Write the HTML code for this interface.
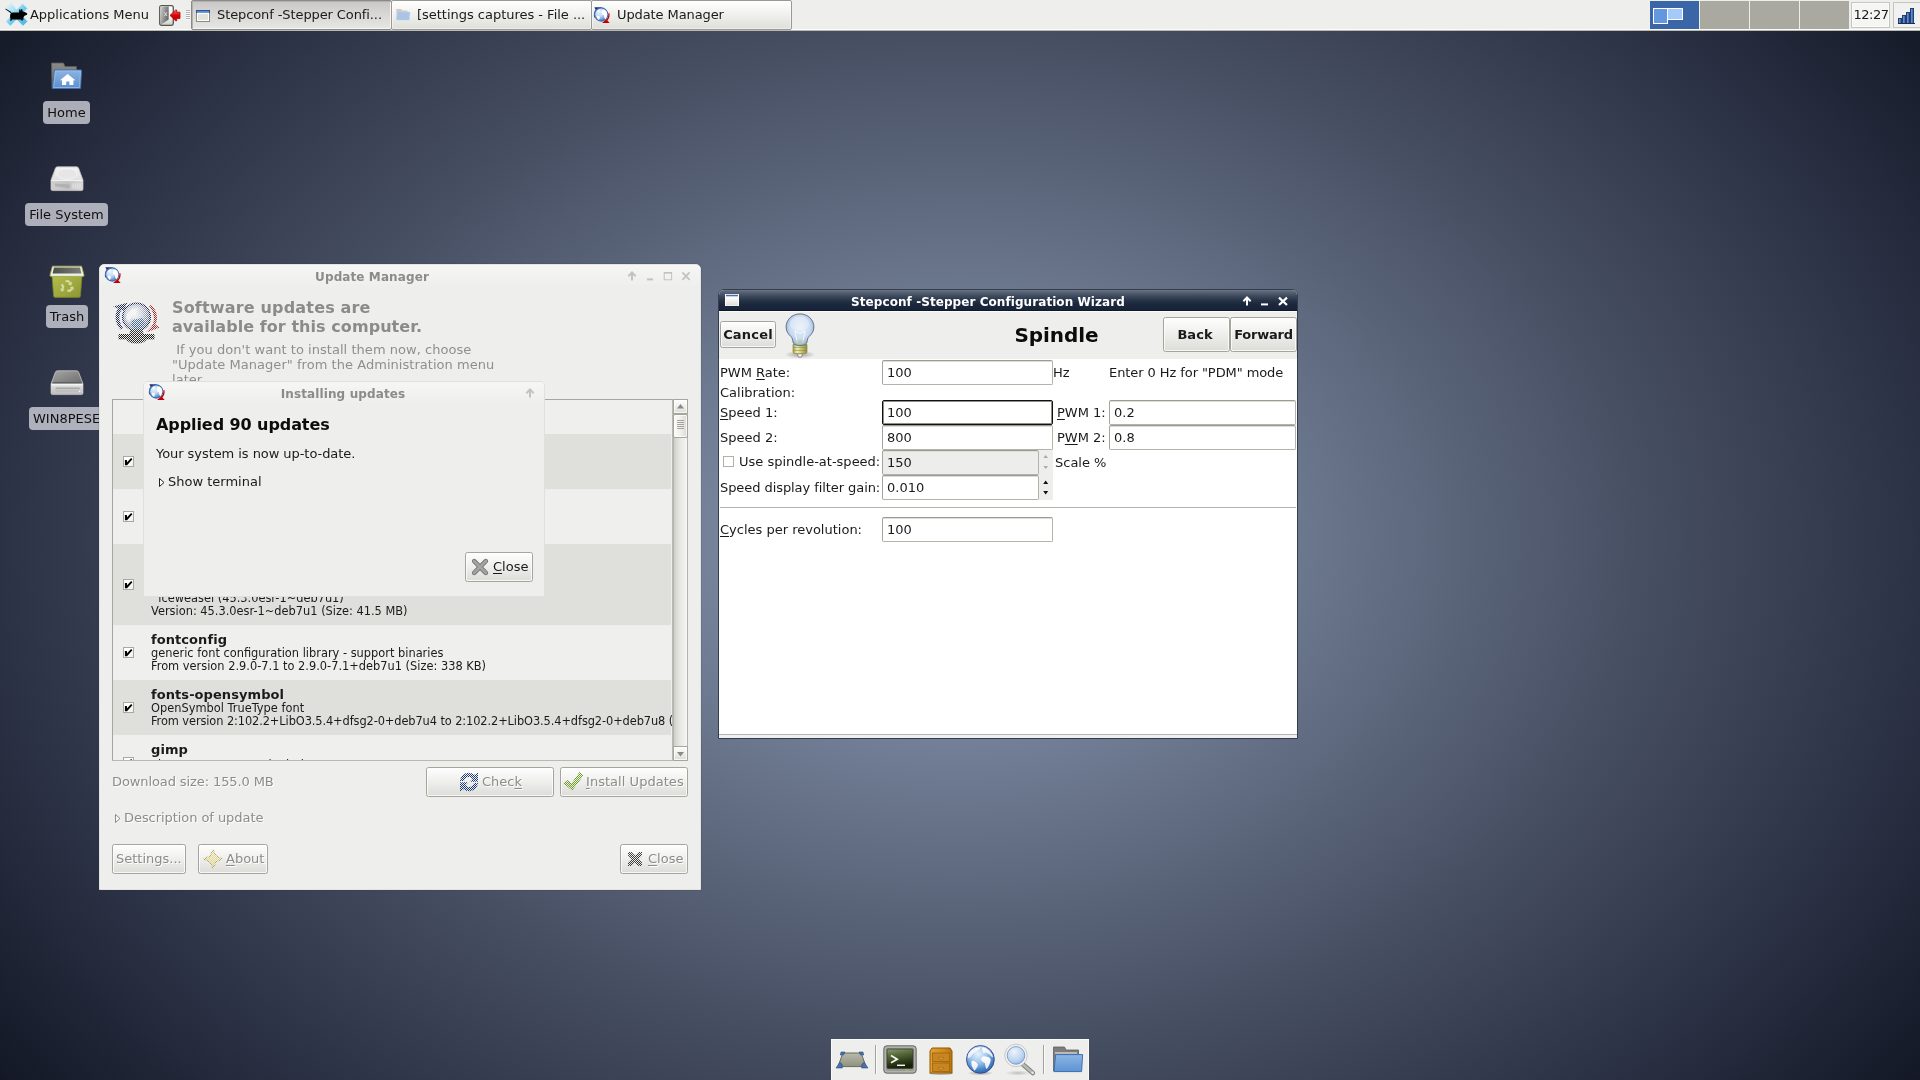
<!DOCTYPE html>
<html lang="en">
<head>
<meta charset="utf-8">
<title>Desktop</title>
<style>
*{box-sizing:border-box;margin:0;padding:0}
html,body{width:1920px;height:1080px;overflow:hidden}
body{position:relative;font-family:"DejaVu Sans","Liberation Sans",sans-serif;font-size:13px;color:#1a1a1a;
 background:#2c3245 radial-gradient(ellipse 1206px 893px at 960px 540px,#8797b0 0%,#758299 20.8%,#474f63 56.3%,#2c3245 79.6%,#161b2a 97.5%,#141826 100%);}
.abs{position:absolute}
.t{position:absolute;white-space:pre;line-height:16px;height:16px}
u{text-decoration:underline;text-underline-offset:2px;text-decoration-thickness:1px}
svg{position:absolute;overflow:visible}
/* ---------- top panel ---------- */
#panel{position:absolute;left:0;top:0;width:1920px;height:31px;background:#eeeeec;border-bottom:1px solid #b9b9b0;box-shadow:inset 0 -1px 0 #fbfbf9}
.task{position:absolute;top:0;height:30px;border:1px solid #9a9892;border-radius:2px;background:linear-gradient(#ffffff,#f1f1ef 45%,#dededa);box-shadow:inset 0 0 0 1px rgba(255,255,255,.45)}
.task.on{background:linear-gradient(#c9c7c5,#d6d5d3 40%,#e6e6e4);border-color:#8c8a86;box-shadow:inset 1px 1px 0 #b4b2af,inset -1px -1px 0 #f6f6f5}
.ws{position:absolute;top:1px;height:28px;width:49px;background:#a9a9a0}
/* ---------- desktop icons ---------- */
.dl{position:absolute;height:23px;line-height:23px;background:rgba(206,208,216,.8);border-radius:4px;text-align:center;color:#101010;white-space:pre;overflow:hidden}
/* ---------- generic gtk ---------- */
.btn{position:absolute;border:1px solid #a5a59b;border-radius:2.5px;background:linear-gradient(#fefefe,#f0f0ee 45%,#dcdcd8);box-shadow:inset 0 0 0 1px rgba(255,255,255,.75)}
.entry{position:absolute;background:#fff;border:1px solid #b3b3aa;border-top-color:#9c9c93;border-left-color:#a5a59c;border-radius:2px;box-shadow:inset 0 1px 0 #deded9}
.dis{color:#8c8d89;text-shadow:1px 1px 0 #fff}
.cb{position:absolute;left:10px;width:11px;height:11px;background:linear-gradient(135deg,#fff 55%,#ecece9);border:1px solid #a9a9a0;display:block}
.cb:after{content:"";position:absolute;left:-1px;top:-1px;width:11px;height:11px;background:#000;clip-path:polygon(1.900px 4.100px,3.900px 4.100px,4.100px 6.300px,8.100px 1.900px,9.400px 3.200px,4.100px 9.300px,1.900px 9.300px)}
.row{position:absolute;left:38px;font-size:11.4px;line-height:13px;white-space:pre;color:#1a1a1a;padding-top:6.5px}
.row b{display:block;font-size:13px;line-height:15px;height:15.500px;letter-spacing:.07px}
</style>
</head>
<body>
<div id="root" style="position:absolute;left:0;top:0;width:1920px;height:1080px;will-change:transform">

<!-- ================= TOP PANEL ================= -->
<div id="panel">
 <!-- xfce logo -->
 <svg style="left:0;top:0" width="32" height="30" viewBox="0 0 32 30">
  <defs><linearGradient id="xg" x1="0" y1="0" x2="1" y2="1"><stop offset="0" stop-color="#ecf9fe"/><stop offset=".35" stop-color="#a6dff5"/><stop offset=".6" stop-color="#63c4ec"/><stop offset="1" stop-color="#4fb6e4"/></linearGradient></defs>
  <path d="M5.200 9.200 L11.400 3.200 L16.600 9.600 L22.600 3.800 L27.400 8.200 L21.600 14.400 L27.600 21.400 L23 26 L16.600 19.600 L10.400 26 L6 21.600 L12 14.600 Z" fill="url(#xg)" stroke="#c9ecf9" stroke-width=".6"/>
  <path d="M5.100 9.100 L5.900 8.700 L11.600 12.300 L11 13.200 Z" fill="#050505"/>
  <path d="M10.400 14 Q10.700 12.400 13 12.400 L19 12.600 L19.300 9.400 L20.200 9 L20.800 11.200 L21.200 9.200 L22.100 9 L22.700 11.400 C24.400 11.600 26 12.200 27.200 13.600 L27 14.800 L24.600 15.700 L23.600 17 L23.200 18.400 L24 19 L23.400 19.500 L22.400 19.400 L22.800 20.700 L21.600 20.500 L20.800 19.600 L12 19.600 L11.200 20.900 L10.100 20.500 L10.500 19 C10 17.600 10 15.600 10.400 14 Z" fill="#020202"/>
 </svg>
 <div class="t" style="left:30px;top:7px;font-size:13px;letter-spacing:-.02px">Applications Menu</div>
 <!-- logout -->
 <svg style="left:159px;top:5px" width="24" height="22" viewBox="0 0 24 22">
  <defs><linearGradient id="dg" x1="0" y1="0" x2="1" y2=".4"><stop offset="0" stop-color="#d2d2d0"/><stop offset=".5" stop-color="#9b9b99"/><stop offset="1" stop-color="#6a6a68"/></linearGradient>
  <linearGradient id="dw" x1="0" y1="0" x2="0" y2="1"><stop offset="0" stop-color="#ffffff"/><stop offset=".6" stop-color="#f4f4f2"/><stop offset="1" stop-color="#c9c9c5"/></linearGradient>
  <linearGradient id="ra" x1="0" y1="0" x2="0" y2="1"><stop offset="0" stop-color="#f06a6a"/><stop offset=".5" stop-color="#dc0505"/><stop offset="1" stop-color="#c60000"/></linearGradient></defs>
  <rect x=".7" y=".7" width="13.600" height="19.600" rx="1.800" fill="url(#dw)" stroke="#555753" stroke-width="1.300"/>
  <path d="M1.400 1.400 H9.700 V14.600 L2.400 19.200 H1.400 Z" fill="url(#dg)"/>
  <path d="M5.400 7.400 L8 11 M8 7.400 L5.400 11" stroke="#e4e4e2" stroke-width=".9"/>
  <path d="M11 10.400 L16.700 5 L17.700 5 L17.700 7.200 L21 7.200 V13.400 H17.700 V15.800 L16.700 15.800 Z" fill="url(#ra)" stroke="#b00000" stroke-width=".8" stroke-linejoin="round"/>
 </svg>
 <!-- handle -->
 <div class="abs" style="left:186px;top:10px;width:4px;height:10px;background:repeating-linear-gradient(#b2b2aa 0 1px,#fafaf9 1px 2px)"></div>

 <!-- task buttons -->
 <div class="task on" style="left:191px;width:201px"></div>
 <svg style="left:196px;top:10px" width="14" height="12" viewBox="0 0 14 12"><rect x=".5" y=".5" width="13" height="11" fill="#e2e4dc" stroke="#8b8b82"/><rect x="1.500" y="3.500" width="11" height="7" fill="none" stroke="#fff"/><rect x="0" y="0" width="14" height="3" fill="#2a5298"/><rect x="1" y="1.200" width="12" height="1.800" fill="#6c9bd8"/></svg>
 <div class="t" style="left:217px;top:7px;letter-spacing:-.1px">Stepconf -Stepper Confi...</div>

 <div class="task" style="left:391px;width:201px"></div>
 <svg style="left:396px;top:8px" width="15" height="13" viewBox="0 0 15 13"><path d="M.4 1 H5.200 L6.200 2.600 H11.400 V11 H.4 Z" fill="#cbcbc9"/><path d="M1.600 4 H14 L13.200 12 H.6 Z" fill="#a9c4e4" stroke="#bcd0e8" stroke-width=".5"/></svg>
 <div class="t" style="left:417px;top:7px;letter-spacing:-.02px">[settings captures - File ...</div>

 <div class="task" style="left:591px;width:201px"></div>
 <svg style="left:594px;top:7px" width="17" height="17" viewBox="0 0 17 17"><use href="#globe16"/></svg>
 <div class="t" style="left:617px;top:7px;letter-spacing:-.1px">Update Manager</div>

 <!-- pager -->
 <div class="ws" style="left:1650px;background:#3a66a7"></div>
 <div class="abs" style="left:1653px;top:8px;width:15px;height:16px;background:#6398e0;border:1px solid #fff"></div>
 <div class="abs" style="left:1667px;top:8px;width:16px;height:12px;background:#a6c9fb;border:1px solid #fff"></div>
 <div class="ws" style="left:1700px"></div>
 <div class="ws" style="left:1750px"></div>
 <div class="ws" style="left:1800px"></div>
 <!-- clock -->
 <div class="abs" style="left:1851px;top:2px;width:39px;height:26px;border:1px solid #c6c6c1;background:#f5f5f3;box-shadow:inset 0 0 0 1px #fbfbfa"></div>
 <div class="t" style="left:1853.500px;top:7px;letter-spacing:-.5px">12:27</div>
 <!-- network -->
 <div class="abs" style="left:1893px;top:2px;width:27px;height:26px;border:1px solid #c6c6c1;border-right:0;background:#f1f1ef"></div>
 <svg style="left:1898px;top:8px" width="18" height="16" viewBox="0 0 18 16">
  <defs><linearGradient id="ng" x1="0" y1="0" x2="1" y2="0"><stop offset="0" stop-color="#7aa3dc"/><stop offset="1" stop-color="#2c5aa0"/></linearGradient></defs>
  <rect x=".5" y="10.5" width="3" height="5" fill="url(#ng)" stroke="#1f3f78"/>
  <rect x="4.5" y="7.5" width="3" height="8" fill="url(#ng)" stroke="#1f3f78"/>
  <rect x="8.5" y="4.5" width="3" height="11" fill="url(#ng)" stroke="#1f3f78"/>
  <rect x="12.5" y=".5" width="3" height="15" fill="url(#ng)" stroke="#1f3f78"/>
  <rect x="0" y="15" width="17" height="1" fill="#1c2c4a"/>
 </svg>
</div>

<!-- shared symbols -->
<svg width="0" height="0" style="left:-10px;top:-10px">
 <defs>
  <radialGradient id="glg" cx=".36" cy=".3" r=".8"><stop offset="0" stop-color="#e8f3ff"/><stop offset=".45" stop-color="#bcd8f6"/><stop offset=".85" stop-color="#4a82c6"/><stop offset="1" stop-color="#3a70b8"/></radialGradient>
  <g id="globe16">
   <path d="M.4 .2 H8.200 L6.600 1.600 C4.400 1.800 2.600 3 1.600 4.800 C.8 6.400 .7 8.400 1.300 10 L.2 10.400 C-.6 7.800 0 5 1.600 2.800 Z" fill="#1f2f78"/>
   <path d="M8 16 H15.700 L13.400 13.400 C15.200 11.600 16 9 15.400 6 L14.200 6.400 C14.600 9 13.800 11.200 12 12.600 Z" fill="#c40000"/>
   <circle cx="7.200" cy="7.500" r="6.600" fill="url(#glg)" stroke="#476cae" stroke-width="1.100"/>
   <path d="M7.800 3.400 L10.600 2.600 L12.600 4.600 L13.400 7.600 L12.600 10.600 L11.200 12.600 L10.200 10.200 L9.800 8 L8 7.400 Z M2.600 9.200 L4.400 8.400 L6 10 L5.400 12.200 L4 12.800 Z M3 4 L5.400 2.400 L6 3.400 L4 5.400 Z" fill="#fff"/>
  </g>
 </defs>
</svg>

<!-- ================= DESKTOP ICONS ================= -->
<!-- Home -->
<svg style="left:50px;top:62px" width="34" height="28" viewBox="0 0 34 28">
 <defs><linearGradient id="hf" x1="0" y1="0" x2="0" y2="1"><stop offset="0" stop-color="#8cb4e2"/><stop offset="1" stop-color="#5b8fd0"/></linearGradient>
 <linearGradient id="hb" x1="0" y1="0" x2="0" y2="1"><stop offset="0" stop-color="#8a8a88"/><stop offset="1" stop-color="#6b6b69"/></linearGradient></defs>
 <path d="M1.5 1 H13.5 L15 4.5 H26.5 V26.5 H2 Z" fill="url(#hb)" stroke="#5c5c5a" stroke-width=".8"/>
 <path d="M4.5 8 H31.5 L30.5 26.5 H2.5 Z" fill="url(#hf)" stroke="#3f6fb3" stroke-width="1"/>
 <path d="M5.4 9 H30.4 L29.6 25.5 H3.6 Z" fill="none" stroke="#a9c8ee" stroke-width=".8" opacity=".8"/>
 <path d="M17.6 12 L25.4 18.2 H23.4 V23 H19.4 V19.4 H16.2 V23 H12 V18.2 H10 Z" fill="#fff"/>
</svg>
<div class="dl" style="left:43px;top:101px;width:47px">Home</div>

<!-- File System -->
<svg style="left:50px;top:166px" width="34" height="26" viewBox="0 0 34 26">
 <defs><linearGradient id="fs1" x1="0" y1="0" x2="0" y2="1"><stop offset="0" stop-color="#f2f2f2"/><stop offset="1" stop-color="#d2d2d2"/></linearGradient>
 <linearGradient id="fs2" x1="0" y1="0" x2="1" y2="0"><stop offset="0" stop-color="#cfcfcf"/><stop offset=".5" stop-color="#c2c2c2"/><stop offset="1" stop-color="#d8d8d8"/></linearGradient></defs>
 <path d="M7.5 .8 H26.5 Q28 .8 28.6 2.2 L33 14 V23 Q33 24.6 31.4 24.6 H2.6 Q1 24.6 1 23 V14 L5.4 2.2 Q6 .8 7.5 .8 Z" fill="url(#fs1)" stroke="#bdbdbd" stroke-width=".8"/>
 <ellipse cx="17" cy="8" rx="10" ry="5.4" fill="#e6e6e6" stroke="#f6f6f6" stroke-width=".8"/>
 <path d="M1.4 15 H32.6 V23 Q32.6 24.2 31.4 24.2 H2.6 Q1.4 24.2 1.4 23 Z" fill="url(#fs2)"/>
 <path d="M1.4 14.6 H32.6" stroke="#f4f4f4" stroke-width="1"/>
 <path d="M5 17.6 L20 18.4 V22.4 L5 20.2 Z" fill="#aaa" opacity=".7"/>
 <path d="M23 17.5 V22.5 M25.3 17.5 V22.5 M27.6 17.5 V22.5 M29.9 17.5 V22.5" stroke="#e4e4e4" stroke-width="1.1"/>
</svg>
<div class="dl" style="left:25px;top:203px;width:83px">File System</div>

<!-- Trash -->
<svg style="left:49px;top:265px" width="36" height="34" viewBox="0 0 36 34">
 <defs><linearGradient id="tg" x1="0" y1="0" x2="1" y2="1"><stop offset="0" stop-color="#b4bd4e"/><stop offset="1" stop-color="#8d9732"/></linearGradient>
 <linearGradient id="ti" x1="0" y1="0" x2="1" y2="0"><stop offset="0" stop-color="#4c4e48"/><stop offset="1" stop-color="#7c7e78"/></linearGradient></defs>
 <path d="M3 11 H33 L31.4 31 Q31.3 32.4 29.8 32.4 H6.2 Q4.7 32.4 4.6 31 Z" fill="url(#tg)" stroke="#7a8426" stroke-width=".8"/>
 <path d="M3.4 1.2 H32.6 L35 10.2 Q35 11.4 33.6 11.4 H2.4 Q1 11.4 1 10.2 Z" fill="#eef0ea" stroke="#a2aa3e" stroke-width=".9"/>
 <path d="M5 2.6 H31 L32.4 8.6 H3.6 Z" fill="url(#ti)"/>
 <g fill="#dfe5b4" opacity=".85">
  <path d="M16 15.4 L19.6 15 L21.6 17.6 L22.8 16.6 L22.6 20.4 L19 19.8 L20.2 18.8 L18.8 17 L17 17.4 Z"/>
  <path d="M13.4 18.6 L15.4 21.6 L14.4 24.6 L15.8 25 L12.6 26.8 L11.2 23.4 L12.6 23.8 L13.2 21.8 L11.8 20.4 Z"/>
  <path d="M18 26.6 L21.4 27 L23.4 24.4 L24.6 25.2 L24.4 21.6 L20.8 22 L22 23 L20.8 24.6 L18.6 24.4 Z"/>
 </g>
</svg>
<div class="dl" style="left:46px;top:305px;width:42px">Trash</div>

<!-- WIN8PESE -->
<svg style="left:50px;top:370px" width="34" height="26" viewBox="0 0 34 26">
 <defs><linearGradient id="rd1" x1="0" y1="0" x2="1" y2="1"><stop offset="0" stop-color="#a6a6a6"/><stop offset="1" stop-color="#6c6c6c"/></linearGradient>
 <linearGradient id="rd2" x1="0" y1="0" x2="0" y2="1"><stop offset="0" stop-color="#e2e2e2"/><stop offset="1" stop-color="#bcbcbc"/></linearGradient></defs>
 <path d="M7.5 .8 H26.5 Q28 .8 28.6 2.2 L33 14 H1 L5.4 2.2 Q6 .8 7.5 .8 Z" fill="url(#rd1)" stroke="#c9c9c9" stroke-width=".8"/>
 <path d="M3.2 12 H30.8 L31.8 14 H2.2 Z" fill="#5f5f5f"/>
 <path d="M1 14 H33 V23 Q33 24.6 31.4 24.6 H2.6 Q1 24.6 1 23 Z" fill="url(#rd2)" stroke="#d6d6d6" stroke-width=".6"/>
 <path d="M1.4 14.6 H32.6" stroke="#f3f3f3" stroke-width="1.6"/>
 <rect x="5.5" y="17.6" width="24.5" height="3.6" rx=".8" fill="#a9a9a9"/>
 <rect x="5.5" y="19.2" width="24.5" height="1.4" fill="#cfcfcf"/>
 <circle cx="29.6" cy="21.4" r=".8" fill="#fff"/>
</svg>
<div class="dl" style="left:29px;top:407px;width:100px;text-align:left;padding-left:4px">WIN8PESE_X</div>

<!-- WINDOWS -->
<!-- ================= UPDATE MANAGER WINDOW ================= -->
<div class="abs" style="left:99px;top:264px;width:602px;height:626px;background:#eeeeec;border-radius:5px 5px 0 0;border:1px solid #e3e3e0;box-shadow:0 0 0 .5px rgba(40,46,64,.25)"></div>
<div class="abs" style="left:100px;top:265px;width:600px;height:22px;border-radius:4px 4px 0 0;background:linear-gradient(#f6f6f5,#eeeeec)"></div>
<svg style="left:105px;top:267px" width="17" height="17" viewBox="0 0 17 17"><use href="#globe16"/></svg>
<div class="t" style="left:272px;top:269px;width:200px;text-align:center;font-weight:bold;font-size:12px;color:#8b8c87;letter-spacing:.1px">Update Manager</div>
<svg style="left:626px;top:270px" width="68" height="12" viewBox="0 0 68 12" fill="none" stroke="#c2c2bf">
 <path d="M6 10.5 V3 M2.4 6.2 L6 2.4 L9.6 6.2" stroke-width="2"/>
 <path d="M21 9.4 H27" stroke-width="2"/>
 <rect x="38.2" y="2.6" width="7.4" height="7.2" stroke-width="1"/><path d="M38 2.8 H46" stroke-width="1.6"/>
 <path d="M56.4 2.4 L63.6 9.8 M63.6 2.4 L56.4 9.8" stroke-width="1.7"/>
</svg>

<!-- big icon (insensitive) -->
<svg style="left:112px;top:302px" width="49" height="42" viewBox="0 0 49 42">
 <defs>
  <pattern id="stip" width="2" height="2" patternUnits="userSpaceOnUse"><rect width="2" height="2" fill="#fff"/><rect width="1" height="1" fill="#000"/><rect x="1" y="1" width="1" height="1" fill="#000"/></pattern>
  <mask id="stm"><rect width="60" height="60" fill="url(#stip)"/></mask>
  <radialGradient id="bg1" cx=".42" cy=".4" r=".62"><stop offset="0" stop-color="#ffffff"/><stop offset=".45" stop-color="#c2cadb"/><stop offset="1" stop-color="#4c5a80"/></radialGradient>
 </defs>
 <g mask="url(#stm)">
  <path d="M1 4.600 L15.400 .8 L11.400 9 L9.800 7.400 C6.400 12 6.600 20 11 26 L8.600 27.400 C2.600 21 2.200 12 6 6.400 Z" fill="#1f2f55"/>
  <path d="M37 4 L39 3 C45.600 9 46.400 17 43.400 22.400 L47.800 25.600 L34 30.400 L39.600 24.600 L41 22 C43 17 42 10 37 4 Z" fill="#a02c2c"/>
  <circle cx="24.500" cy="15" r="13.800" fill="url(#bg1)" stroke="#26264f" stroke-width="1.600"/>
  <path d="M15 12 L20 7 L26 6 L24 11 L19 15 L17 20 L14 17 Z" fill="#fff" opacity=".85"/>
  <path d="M20 18 L30 16 L33 21 L29 27 L23 27.600 L19 23 Z" fill="#3c5f96" opacity=".85"/>
  <path d="M18.500 27.600 H30.500 L31.600 32 H17.400 Z" fill="#333"/>
  <rect x="6.500" y="32" width="36" height="5.400" fill="#1c1c1c"/>
  <ellipse cx="24.500" cy="37" rx="10" ry="4.600" fill="#2a2a2a"/>
 </g>
</svg>
<div class="abs dis" style="left:172px;top:298px;font-weight:bold;font-size:16px;line-height:19px;white-space:pre;color:#8b8c87;text-shadow:none;letter-spacing:.06px"><span style="letter-spacing:.17px">Software updates are</span>
available for this computer.</div>
<div class="abs" style="left:172px;top:342px;font-size:13px;line-height:15px;white-space:pre;color:#8f908c;letter-spacing:.04px"> If you don't want to install them now, choose
"Update Manager" from the Administration menu
later.</div>

<!-- list -->
<div class="abs" style="left:112px;top:399px;width:561px;height:362px;border:1px solid #a6a69d;border-bottom-color:#b9b9b1;border-right-color:#b9b9b1;background:#efefed;overflow:hidden">
 <div class="abs" style="left:0;top:34px;width:558px;height:55px;background:#dfe0db"></div>
 <div class="abs" style="left:0;top:144px;width:558px;height:81px;background:#dfe0db"></div>
 <div class="abs" style="left:0;top:280px;width:558px;height:55px;background:#dfe0db"></div>
 <i class="cb" style="top:56px"></i><i class="cb" style="top:111px"></i><i class="cb" style="top:179px"></i><i class="cb" style="top:247px"></i><i class="cb" style="top:302px"></i><i class="cb" style="top:357px"></i>
 <div class="row" style="top:34px"><b>file</b>Determines file type using "magic" numbers<br>From version 5.11-2+deb7u8 to 5.11-2+deb7u9 (Size: 53 KB)</div>
 <div class="row" style="top:89px"><b>firebird2.5</b>Firebird client library<br>From version 2.5.2 to 2.5.2+deb7u1 (Size: 493 KB)</div>
 <div class="row" style="top:144px"><b>firefox</b>Web browser based on Firefox<br>Packages:<br>  iceweasel (45.3.0esr-1~deb7u1)<br>Version: 45.3.0esr-1~deb7u1 (Size: 41.5 MB)</div>
 <div class="row" style="top:225px"><b>fontconfig</b>generic font configuration library - support binaries<br>From version 2.9.0-7.1 to 2.9.0-7.1+deb7u1 (Size: 338 KB)</div>
 <div class="row" style="top:280px"><b>fonts-opensymbol</b>OpenSymbol TrueType font<br><span style="letter-spacing:-.1px">From version 2:102.2+LibO3.5.4+dfsg2-0+deb7u4 to 2:102.2+LibO3.5.4+dfsg2-0+deb7u8 (Size: 200 KB)</span></div>
 <div class="row" style="top:335px"><b>gimp</b><span style="position:relative;top:2.300px">The GNU Image Manipulation Program<br>From version 2.8.2-2+deb7u1 to 2.8.2-2+deb7u2 (Size: 4.6 MB)</span></div>
</div>
<!-- scrollbar -->
<div class="abs" style="left:673px;top:399px;width:15px;height:362px;background:linear-gradient(90deg,#cfcfcb,#e4e4e1 40%,#f6f6f5);border:1px solid #b4b4ac"></div>
<div class="btn" style="left:673px;top:399px;width:15px;height:15px;border-radius:1px"></div>
<div class="btn" style="left:673px;top:414px;width:15px;height:24px;border-radius:2px;background:linear-gradient(90deg,#fdfdfd,#efefed 50%,#d9d9d5)"></div>
<div class="abs" style="left:677px;top:420px;width:7px;height:10px;background:repeating-linear-gradient(#a4a49c 0 1px,transparent 1px 2px)"></div>
<div class="btn" style="left:673px;top:746px;width:15px;height:15px;border-radius:1px"></div>
<svg style="left:673px;top:399px" width="15" height="362" viewBox="0 0 15 362"><path d="M4 9.5 L7.5 5 L11 9.5 Z" fill="#8a8b86"/><path d="M4 353 L7.5 357.5 L11 353 Z" fill="#8a8b86"/></svg>

<div class="t dis" style="left:112px;top:774px;letter-spacing:-.1px">Download size: 155.0 MB</div>
<div class="btn" style="left:426px;top:767px;width:128px;height:30px"></div>
<svg style="left:459px;top:772px" width="20" height="20" viewBox="0 0 20 20"><g mask="url(#stm)">
 <path d="M1 9 C1.600 4 5.600 .8 10 .8 C12 .8 13.800 1.600 15.200 2.800 L19 .6 V9.800 H10.600 L13.400 7 C12.400 5.600 11.200 5 10 5 C7.600 5 5.600 6.600 5 9 Z" fill="#1c3c78"/>
 <path d="M19 11 C18.400 16 14.400 19.200 10 19.200 C8 19.200 6.200 18.400 4.800 17.200 L1 19.400 V10.200 H9.400 L6.600 13 C7.600 14.400 8.800 15 10 15 C12.400 15 14.400 13.400 15 11 Z" fill="#1c3c78"/>
</g></svg>
<div class="t dis" style="left:482px;top:774px">Chec<u>k</u></div>
<div class="btn" style="left:560px;top:767px;width:128px;height:30px"></div>
<svg style="left:563px;top:771px" width="21" height="20" viewBox="0 0 21 20"><g mask="url(#stm)"><path d="M1.4 12.4 L5 9.6 L8.4 13.4 L16.6 1.6 L20 4.4 L9 19 Z" fill="#73a21c" stroke="#4e7a10" stroke-width=".8"/></g></svg>
<div class="t dis" style="left:586px;top:774px;letter-spacing:.04px"><u>I</u>nstall Updates</div>

<svg style="left:114px;top:813px" width="8" height="11" viewBox="0 0 8 11"><path d="M1.5 1.5 L6 5.5 L1.5 9.5 Z" fill="#fafafa" stroke="#8a8b86" stroke-width="1"/></svg>
<div class="t dis" style="left:124px;top:810px;letter-spacing:-.06px">Description of update</div>

<div class="btn" style="left:112px;top:844px;width:74px;height:30px"></div>
<div class="t dis" style="left:116px;top:851px">Settings...</div>
<div class="btn" style="left:198px;top:844px;width:70px;height:30px"></div>
<svg style="left:203px;top:849px" width="20" height="20" viewBox="0 0 20 20"><g mask="url(#stm)"><path d="M10 .8 L13 7 L19.2 10 L13 13 L10 19.2 L7 13 L.8 10 L7 7 Z" fill="#e6d98a" stroke="#a59a3c" stroke-width="1"/></g></svg>
<div class="t dis" style="left:226px;top:851px"><u>A</u>bout</div>
<div class="btn" style="left:620px;top:844px;width:68px;height:30px"></div>
<svg style="left:626px;top:850px" width="18" height="18" viewBox="0 0 18 18"><g mask="url(#stm)"><path d="M3.200 3.200 L14.800 14.800 M14.800 3.200 L3.200 14.800" stroke="#3c3c3a" stroke-width="5" stroke-linecap="round"/></g></svg>
<div class="t dis" style="left:648px;top:851px"><u>C</u>lose</div>
<!--UMEND-->
<!-- ================= INSTALLING UPDATES DIALOG ================= -->
<div class="abs" style="left:143px;top:381px;width:402px;height:216px;background:#eeeeec;border-radius:5px 5px 0 0;border:1px solid #e0e0dd"></div>
<div class="abs" style="left:144px;top:382px;width:400px;height:22px;border-radius:4px 4px 0 0;background:linear-gradient(#f6f6f5,#eeeeec)"></div>
<svg style="left:149px;top:384px" width="17" height="17" viewBox="0 0 17 17"><use href="#globe16"/></svg>
<div class="t" style="left:243px;top:386px;width:200px;text-align:center;font-weight:bold;font-size:12px;color:#8b8c87;letter-spacing:.12px">Installing updates</div>
<svg style="left:524px;top:387px" width="12" height="12" viewBox="0 0 12 12" fill="none" stroke="#c2c2bf"><path d="M6 10.5 V3 M2.4 6.2 L6 2.4 L9.6 6.2" stroke-width="2"/></svg>
<div class="t" style="left:156px;top:415px;font-weight:bold;font-size:16px;line-height:20px;height:20px;letter-spacing:-.08px;color:#0c0c0c">Applied 90 updates</div>
<div class="t" style="left:156px;top:446px;letter-spacing:-.06px">Your system is now up-to-date.</div>
<svg style="left:158px;top:476.500px" width="8" height="11" viewBox="0 0 8 11"><path d="M1.5 1.5 L6 5.5 L1.5 9.5 Z" fill="#fff" stroke="#222" stroke-width="1"/></svg>
<div class="t" style="left:168px;top:474px">Show terminal</div>
<div class="btn" style="left:465px;top:552px;width:68px;height:30px"></div>
<svg style="left:471px;top:558px" width="18" height="18" viewBox="0 0 18 18"><path d="M3.2 3.2 L14.8 14.8 M14.8 3.2 L3.2 14.8" stroke="#6f706b" stroke-width="4.6" stroke-linecap="round"/><path d="M3.2 3.2 L14.8 14.8 M14.8 3.2 L3.2 14.8" stroke="#a3a49f" stroke-width="3" stroke-linecap="round"/></svg>
<div class="t" style="left:493px;top:559px"><u>C</u>lose</div>

<!-- ================= STEPCONF WINDOW ================= -->
<div class="abs" style="left:718px;top:289px;width:580px;height:450px;background:#fff;border:1px solid #323d4f;border-radius:6px 6px 0 0;overflow:hidden">
 <div class="abs" style="left:0;top:0;width:578px;height:21px;background:linear-gradient(#6b7481 0,#566273 12%,#3e4b5e 30%,#273448 52%,#1b273b 72%,#17233a 100%);border-bottom:1px solid #0e1929"></div>
 <div class="abs" style="left:0;top:21px;width:578px;height:48px;background:#eeeeec;border-top:1px solid #fbfbf8"></div>
 <div class="abs" style="left:0;top:444px;width:578px;height:4px;background:#f0f0ee;border-top:1.5px solid #b4b4b2"></div>
</div>
<svg style="left:725px;top:294px" width="14" height="12" viewBox="0 0 14 12"><defs><linearGradient id="wi" x1="0" y1="0" x2="0" y2="1"><stop offset="0" stop-color="#fff"/><stop offset=".35" stop-color="#fbfbfa"/><stop offset="1" stop-color="#dcded7"/></linearGradient></defs><rect x="0" y="0" width="14" height="12" fill="#fdfdfb"/><rect x="1" y="1" width="12" height="10.500" fill="url(#wi)"/><rect x="1" y=".8" width="12" height="1.500" fill="#4a6eb0"/></svg>
<div class="t" style="left:838px;top:294px;width:300px;text-align:center;font-weight:bold;font-size:12px;color:#fff;letter-spacing:.07px">Stepconf -Stepper Configuration Wizard</div>
<svg style="left:1241px;top:295px" width="50" height="12" viewBox="0 0 50 12" fill="none" stroke="#fff">
 <path d="M6 10.5 V3 M2.4 6.2 L6 2.4 L9.6 6.2" stroke-width="2"/>
 <path d="M20 9.4 H27" stroke-width="2"/>
 <path d="M38 2.6 L46 10 M46 2.6 L38 10" stroke-width="2.2"/>
</svg>

<div class="btn" style="left:720px;top:321px;width:56px;height:27px"></div>
<div class="t" style="left:720px;top:327px;width:56px;text-align:center;font-weight:bold;letter-spacing:.2px">Cancel</div>
<!-- bulb -->
<svg style="left:784px;top:312.500px" width="32" height="46" viewBox="0 0 32 46">
 <defs>
  <radialGradient id="bl1" cx=".5" cy=".42" r=".6"><stop offset="0" stop-color="#e4edf7"/><stop offset=".6" stop-color="#cddcf0"/><stop offset=".85" stop-color="#9cbde8"/><stop offset="1" stop-color="#6f9fe0"/></radialGradient>
  <linearGradient id="bl2" x1="0" y1="0" x2="1" y2="0"><stop offset="0" stop-color="#a4a148"/><stop offset=".3" stop-color="#f2f0bc"/><stop offset=".6" stop-color="#c9c670"/><stop offset="1" stop-color="#8f8c3a"/></linearGradient>
  <radialGradient id="bl3" cx=".5" cy=".5" r=".5"><stop offset="0" stop-color="#000" stop-opacity=".32"/><stop offset="1" stop-color="#000" stop-opacity="0"/></radialGradient>
 </defs>
 <ellipse cx="16" cy="41.600" rx="15.500" ry="3.800" fill="url(#bl3)"/>
 <circle cx="16" cy="42" r="2.400" fill="#e6e6e4" stroke="#6a6a68" stroke-width=".7"/>
 <path d="M9 31.400 H23 V38.800 Q23 40.600 21 40.600 H11 Q9 40.600 9 38.800 Z" fill="url(#bl2)" stroke="#8a873a" stroke-width=".7"/>
 <path d="M9.200 34.400 H22.800 M9.200 37.400 H22.800" stroke="#8d8a3e" stroke-width=".8" opacity=".8"/>
 <path d="M16 .9 C8 .9 2.100 6.800 2.100 14 C2.100 18.600 4.600 21.400 7 23.600 C8.200 24.800 8.600 26.600 9 29 C9.400 31.400 12 32.600 16 32.600 C20 32.600 22.600 31.400 23 29 C23.400 26.600 23.800 24.800 25 23.600 C27.400 21.400 29.900 18.600 29.900 14 C29.900 6.800 24 .9 16 .9 Z" fill="url(#bl1)" stroke="#5d6679" stroke-width=".9"/>
 <ellipse cx="15.500" cy="11" rx="9.500" ry="7.600" fill="#fff" opacity=".28"/>
 <path d="M13.400 29.600 L11 18 L16 20.600 L21 18 L18.600 29.600" fill="none" stroke="#fff" stroke-width="1" opacity=".75"/>
 <path d="M10 29 Q16 25 22 29 Q20 31.600 16 31.600 Q12 31.600 10 29 Z" fill="#c9cc98" opacity=".6"/>
</svg>
<div class="t" style="left:1014.500px;top:323px;font-weight:bold;font-size:20px;line-height:24px;height:24px;letter-spacing:-.1px;color:#0c0c0c">Spindle</div>
<div class="btn" style="left:1163px;top:317px;width:67px;height:35px"></div>
<div class="t" style="left:1161.500px;top:327px;width:67px;text-align:center;font-weight:bold;letter-spacing:.05px">Back</div>
<div class="btn" style="left:1230px;top:317px;width:67px;height:35px"></div>
<div class="t" style="left:1230px;top:327px;width:67px;text-align:center;font-weight:bold;letter-spacing:-.25px">Forward</div>

<div class="t" style="left:720px;top:365px">PWM <u>R</u>ate:</div>
<div class="entry" style="left:882px;top:360px;width:171px;height:25px"></div><div class="t" style="left:887px;top:365px">100</div>
<div class="t" style="left:1053px;top:365px">Hz</div>
<div class="t" style="left:1109px;top:365px;letter-spacing:-.08px">Enter 0 Hz for "PDM" mode</div>
<div class="t" style="left:720px;top:385px">Calibration:</div>
<div class="t" style="left:720px;top:405px"><u>S</u>peed 1:</div>
<div class="entry" style="left:882px;top:400px;width:171px;height:25px;border:1px solid #111;box-shadow:inset 0 0 0 1px #8f8f87"></div><div class="t" style="left:887px;top:405px">100</div>
<div class="t" style="left:1057px;top:405px"><u>P</u>WM 1:</div>
<div class="entry" style="left:1109px;top:400px;width:187px;height:25px"></div><div class="t" style="left:1114px;top:405px">0.2</div>
<div class="t" style="left:720px;top:430px">Speed 2:</div>
<div class="entry" style="left:882px;top:425px;width:171px;height:25px"></div><div class="t" style="left:887px;top:430px">800</div>
<div class="t" style="left:1057px;top:430px">P<u>W</u>M 2:</div>
<div class="entry" style="left:1109px;top:425px;width:187px;height:25px"></div><div class="t" style="left:1114px;top:430px">0.8</div>

<div class="abs" style="left:723px;top:456px;width:11px;height:11px;background:#fff;border:1px solid #b1b1a9"></div>
<div class="t" style="left:739px;top:454px;letter-spacing:0">Use spindle-at-speed:</div>
<div class="abs" style="left:1039px;top:450px;width:14px;height:50px;background:#eeeeec"></div>
<div class="entry" style="left:882px;top:450px;width:157px;height:25px;background:#ededeb"></div><div class="t" style="left:887px;top:455px">150</div>
<div class="t" style="left:1055px;top:455px">Scale %</div>
<div class="t" style="left:720px;top:480px;letter-spacing:-.07px">Speed display filter gain:</div>
<div class="entry" style="left:882px;top:475px;width:157px;height:25px"></div><div class="t" style="left:887px;top:480px">0.010</div>
<svg style="left:1039px;top:450px" width="14" height="50" viewBox="0 0 14 50"><path d="M4.400 8 L6.700 5 L9 8 Z M4.400 16 L6.700 19 L9 16 Z" fill="#aaaaa4"/><path d="M4.200 34 L6.700 30.600 L9.200 34 Z M4.200 41 L6.700 44.400 L9.200 41 Z" fill="#111"/></svg>
<div class="abs" style="left:720px;top:507px;width:576px;height:1px;background:#b3b3ab"></div>
<div class="t" style="left:720px;top:522px;letter-spacing:0"><u>C</u>ycles per revolution:</div>
<div class="entry" style="left:882px;top:517px;width:171px;height:25px"></div><div class="t" style="left:887px;top:522px">100</div>

<!-- ================= BOTTOM PANEL ================= -->
<div class="abs" style="left:831px;top:1039px;width:258px;height:41px;background:#eeeeec;border:1px solid #fafafa;border-bottom:0"></div>
<div class="abs" style="left:875px;top:1045px;width:2px;height:29px;background:linear-gradient(90deg,#a3a39b 50%,#fbfbfa 50%)"></div>
<div class="abs" style="left:1043px;top:1045px;width:2px;height:29px;background:linear-gradient(90deg,#a3a39b 50%,#fbfbfa 50%)"></div>
<!-- show desktop -->
<svg style="left:835px;top:1051px" width="34" height="19" viewBox="0 0 34 19">
 <defs><linearGradient id="sd" x1="0" y1="0" x2="0" y2="1"><stop offset="0" stop-color="#b9baaa"/><stop offset="1" stop-color="#8f917f"/></linearGradient></defs>
 <path d="M10.500 2 H23.500 Q26 2 27 4.400 L31 15.600 H3 L7 4.400 Q8 2 10.500 2 Z" fill="url(#sd)" stroke="#67695b" stroke-width="1"/>
 <g fill="#4a72ae" stroke="#2c4a82" stroke-width=".6"><path d="M6 1 H10 L8.400 4 H5.400 Z"/><path d="M24 1 H28 L28.600 4 H25.600 Z"/><path d="M1 17 L4.800 11.400 L7 13 L7.400 17 Z"/><path d="M33 17 L29.200 11.400 L27 13 L26.600 17 Z"/></g>
</svg>
<!-- terminal -->
<svg style="left:883px;top:1045px" width="34" height="29" viewBox="0 0 34 29">
 <defs><linearGradient id="tm" x1="0" y1="0" x2=".25" y2="1"><stop offset="0" stop-color="#8c9e70"/><stop offset=".35" stop-color="#5a6c3c"/><stop offset=".75" stop-color="#2c3a1a"/><stop offset="1" stop-color="#182008"/></linearGradient></defs>
 <rect x=".8" y=".8" width="32.400" height="27.400" rx="3" fill="#9a9b96" stroke="#6c6d68" stroke-width="1"/>
 <rect x="2.200" y="2.200" width="29.600" height="24.600" rx="2" fill="none" stroke="#c4c5c0" stroke-width=".8"/>
 <rect x="4" y="4" width="26" height="19.400" rx="1" fill="url(#tm)" stroke="#3a3b36" stroke-width=".8"/>
 <path d="M8 10.600 L14.200 14.200 L8 17.800" fill="none" stroke="#f4f8ee" stroke-width="1.700"/>
 <path d="M14 20.300 H22" stroke="#f4f8ee" stroke-width="1.500"/>
 <circle cx="23.600" cy="25.400" r=".9" fill="#8ae234"/>
</svg>
<!-- file cabinet -->
<svg style="left:929px;top:1047px" width="24" height="28" viewBox="0 0 24 28">
 <defs><linearGradient id="fc" x1="0" y1="0" x2="1" y2="0"><stop offset="0" stop-color="#e3a133"/><stop offset=".6" stop-color="#d18a1e"/><stop offset="1" stop-color="#b87510"/></linearGradient></defs>
 <ellipse cx="12" cy="26.400" rx="12" ry="1.600" fill="#000" opacity=".25"/>
 <path d="M3 1 H21 L23 4 V26 H1 V4 Z" fill="url(#fc)" stroke="#8f5902" stroke-width="1"/>
 <rect x="3.400" y="6" width="17.200" height="8.400" fill="#c98522" stroke="#9c6408" stroke-width=".8"/>
 <rect x="3.400" y="16" width="17.200" height="8.400" fill="#c98522" stroke="#9c6408" stroke-width=".8"/>
 <path d="M9.600 10.400 H14.400 V12 H9.600 Z M9.600 20.400 H14.400 V22 H9.600 Z" fill="#e9b44e" stroke="#8f5902" stroke-width=".5"/>
</svg>
<!-- globe -->
<svg style="left:965px;top:1044px" width="31" height="32" viewBox="0 0 31 32">
 <defs><radialGradient id="gb" cx=".42" cy=".3" r=".75"><stop offset="0" stop-color="#e6f3ff"/><stop offset=".4" stop-color="#a4caf0"/><stop offset=".8" stop-color="#3f7cc2"/><stop offset="1" stop-color="#2c62a8"/></radialGradient>
 <radialGradient id="gsh" cx=".5" cy=".5" r=".5"><stop offset="0" stop-color="#000" stop-opacity=".35"/><stop offset="1" stop-color="#000" stop-opacity="0"/></radialGradient>
 <linearGradient id="gw" x1="0" y1="0" x2="0" y2="1"><stop offset="0" stop-color="#ffffff"/><stop offset="1" stop-color="#e4e8ee"/></linearGradient></defs>
 <ellipse cx="15.400" cy="29" rx="13" ry="2.600" fill="url(#gsh)"/>
 <circle cx="15.400" cy="15.400" r="13.900" fill="url(#gb)" stroke="#3a4496" stroke-width=".9"/>
 <g fill="url(#gw)">
 <path d="M2.500 13.500 L3.300 9.750 L5.800 6.800 L9.600 4.300 L13.750 3.500 L15.800 3.100 L15 4.750 L12.500 6.400 L10 8.500 L7.500 10.200 L5.800 12.700 L3.750 14.300 Z"/>
 <path d="M6.250 18.100 L7.900 16.400 L10.800 18.100 L12.900 20.200 L12.500 22.700 L10.800 25.200 L9.200 26.800 L7.900 24.300 L6.700 21.800 Z"/>
 <path d="M16.700 3.100 L20.800 3.900 L24.200 6.400 L27.100 10.200 L28.300 13.500 L26.700 12.700 L24.200 10.200 L20.800 8.500 L18.300 9.300 L17.500 6.800 Z"/>
 <path d="M16.250 13.900 L18.300 12.250 L21.700 12.700 L24.200 13.500 L25.800 15.600 L25 19.300 L23.300 22.700 L21.700 25.200 L20.400 22.700 L20 19.300 L17.500 17.700 L16.250 16 Z"/>
 </g>
</svg>
<!-- magnifier -->
<svg style="left:1003px;top:1043px" width="34" height="34" viewBox="0 0 34 34">
 <defs><radialGradient id="mg" cx=".4" cy=".3" r=".75"><stop offset="0" stop-color="#eef4fb"/><stop offset=".7" stop-color="#bcd3ee"/><stop offset="1" stop-color="#8fb4e0"/></radialGradient>
 <radialGradient id="msh" cx=".5" cy=".5" r=".5"><stop offset="0" stop-color="#000" stop-opacity=".2"/><stop offset="1" stop-color="#000" stop-opacity="0"/></radialGradient></defs>
 <ellipse cx="15" cy="30" rx="13" ry="2.600" fill="url(#msh)"/>
 <path d="M20 21.400 L29.800 30" stroke="#7f807b" stroke-width="4.600" stroke-linecap="round"/>
 <path d="M20 21.400 L29.800 30" stroke="#b9bab6" stroke-width="2.600" stroke-linecap="round"/>
 <circle cx="29.600" cy="29.800" r="1.300" fill="#e8e8e6"/>
 <circle cx="13" cy="12.400" r="11.250" fill="#f2f2f0" stroke="#bdbdb9" stroke-width=".8"/>
 <circle cx="13" cy="12.400" r="8.800" fill="url(#mg)" stroke="#6f9ad2" stroke-width=".9"/>
</svg>
<!-- folder -->
<svg style="left:1052px;top:1046px" width="32" height="27" viewBox="0 0 32 27">
 <defs><linearGradient id="fo" x1="0" y1="0" x2="0" y2="1"><stop offset="0" stop-color="#8db5e4"/><stop offset="1" stop-color="#5e93d3"/></linearGradient></defs>
 <path d="M1.500 1 H12.500 L14 4 H26.500 V25 H1.500 Z" fill="#7d7d7b" stroke="#5d5d5b" stroke-width=".8"/>
 <path d="M3 6 H25 V8 H3 Z" fill="#b9b9b7"/>
 <path d="M3.600 8.600 H30.600 L29.600 25.600 H2 Z" fill="url(#fo)" stroke="#3f6fb3" stroke-width="1"/>
</svg>

</div>
</body>
</html>
